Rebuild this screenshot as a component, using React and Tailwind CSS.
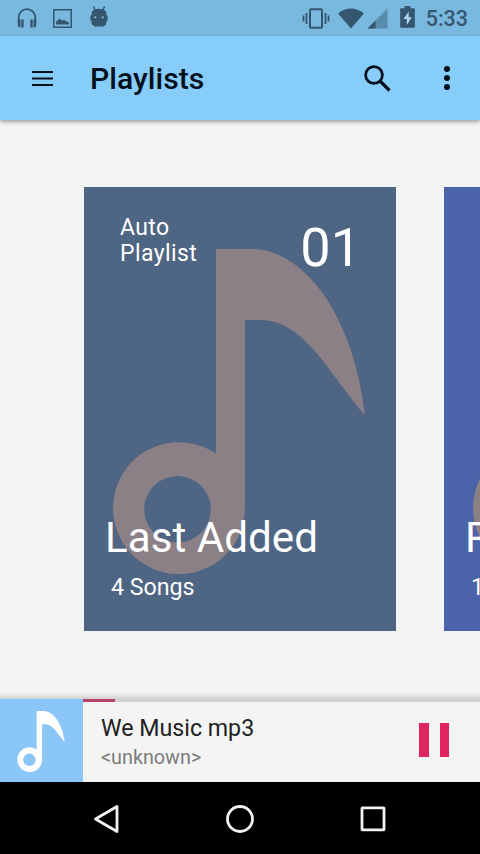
import React, { useState } from "react";

const playlists = [
  {
    id: 1,
    type: "Auto Playlist",
    number: "01",
    name: "Last Added",
    count: "4 Songs",
    color: "bg-[#4e6583]",
  },
  {
    id: 2,
    name: "R",
    count: "1",
    color: "bg-[#4b63a9]",
  },
];

const App = () => {
  const [progress] = useState(8);

  return (
    <div className="flex h-[854px] w-[480px] flex-col overflow-hidden bg-[#f4f4f4] font-['Roboto',sans-serif]">
      <StatusBar />
      <Toolbar title="Playlists" />

      {/* Playlist carousel */}
      <main className="flex min-h-0 flex-1 gap-12 overflow-hidden pt-[67px] pl-[84px]">
        {playlists.map((playlist) => (
          <PlaylistCard key={playlist.id} playlist={playlist} />
        ))}
      </main>

      <NowPlaying title="We Music mp3" artist="<unknown>" progress={progress} />
      <NavigationBar />
    </div>
  );
};

const StatusBar = () => {
  return (
    <div className="flex h-9 shrink-0 items-center bg-[#79b8df] pr-[12px] pl-[17px] text-[#34566f]">
      {/* Notifications */}
      <svg width="20" height="21" viewBox="0 0 20 21" fill="none">
        <path
          d="M1.7 14V9.500a8.300 8.300 0 0 1 16.600 0V14"
          stroke="currentColor"
          strokeWidth="1.800"
        />
        <path
          d="M.8 11.500h2.700v8H3a2.200 2.200 0 0 1-2.200-2.200zM4.300 11.500h2.400v8H4.300zM19.200 11.500h-2.700v8h.5a2.200 2.200 0 0 0 2.200-2.200zM13.300 11.500h2.400v8h-2.400z"
          fill="currentColor"
        />
      </svg>
      <svg className="ml-[16px]" width="19" height="19" viewBox="0 0 19 19">
        <path
          d="M.8.8h17.4v17.4H.8z"
          fill="none"
          stroke="currentColor"
          strokeWidth="1.5"
        />
        <path
          d="M3 15.5v-2.7l3.6-3.3 2.5 2.3 1.4-1 1.5.7 4 2v2z"
          fill="currentColor"
        />
      </svg>
      <svg
        className="mb-[3px] ml-[18px]"
        width="18"
        height="21"
        viewBox="0 0 18 21"
      >
        <path
          d="M3.5.5 5 4M14.500.5 13 4"
          stroke="currentColor"
          strokeWidth="1.5"
        />
        <path
          d="M4.500 3.200Q9 2.500 13.500 3.200L16 5.500l.6 4h1v5h-1l-.4 3.500-2.500 2.500H4.300L1.800 18l-.4-3.500h-1v-5h1L2 5.500z"
          fill="currentColor"
        />
        <circle cx="5.300" cy="11.300" r="1.100" fill="#8fbbd6" />
        <circle cx="12.700" cy="11.300" r="1.100" fill="#8fbbd6" />
      </svg>

      {/* System icons */}
      <div className="ml-auto flex items-center">
        <svg width="28" height="21" viewBox="0 0 28 21" fill="none">
          <rect
            x="8"
            y="1.200"
            width="12"
            height="18.600"
            rx="1"
            stroke="currentColor"
            strokeWidth="2"
          />
          <path
            d="M1.500 7.500v6M4.500 5v11M23.500 5v11M26.500 7.500v6"
            stroke="currentColor"
            strokeWidth="1.800"
          />
        </svg>
        <svg className="ml-[8px]" width="26" height="21" viewBox="0 0 27 21">
          <path d="M0 5.300Q13.500-5 27 5.300L13.500 21z" fill="currentColor" />
        </svg>
        <svg className="ml-[3px]" width="21" height="21" viewBox="0 0 21 21">
          <path d="M20.500.5v20H.5z" fill="currentColor" opacity=".45" />
          <path d="M8.500 12.500v8h-8z" fill="currentColor" />
        </svg>
        <svg
          className="mb-[2px] ml-[12px]"
          width="15"
          height="22"
          viewBox="0 0 15 22"
        >
          <path
            d="M4.500 0h6v2.200H14a.8.8 0 0 1 .8.8v18a.8.8 0 0 1-.8.8H1a.8.8 0 0 1-.8-.8V3a.8.8 0 0 1 .8-.8h3.500z"
            fill="currentColor"
          />
          <path d="M8.700 5.500 3.500 13h3.300v6l5-7.800H8.700z" fill="#a9d6f2" />
        </svg>
        <span className="ml-[11px] pt-px text-[21.500px] leading-9 font-medium">
          5:33
        </span>
      </div>
    </div>
  );
};

const Toolbar = ({ title }) => {
  return (
    <header className="z-10 flex h-[84px] shrink-0 items-center bg-[#87cdfa] pl-8 text-[#06101c] shadow-[0_2px_4px_rgba(0,0,0,0.35)]">
      <button aria-label="Menu">
        <svg width="21" height="15" viewBox="0 0 21 15">
          <path
            d="M0 1h21M0 7.5h21M0 14h21"
            stroke="currentColor"
            strokeWidth="2"
          />
        </svg>
      </button>
      <h1 className="ml-[37px] pt-px text-[30.200px] leading-9 font-medium">
        {title}
      </h1>
      <button aria-label="Search" className="mr-[53px] ml-auto">
        <svg width="27" height="27" viewBox="0 0 27 27" fill="none">
          <circle
            cx="10"
            cy="10"
            r="8.4"
            stroke="currentColor"
            strokeWidth="2.7"
          />
          <path d="m16 16 9.5 9.5" stroke="currentColor" strokeWidth="3.2" />
        </svg>
      </button>
      <button aria-label="More options" className="mr-[30px]">
        <svg width="6" height="24" viewBox="0 0 6 24" fill="currentColor">
          <circle cx="3" cy="3" r="3" />
          <circle cx="3" cy="12" r="3" />
          <circle cx="3" cy="21" r="3" />
        </svg>
      </button>
    </header>
  );
};

const NoteIcon = ({ className }) => {
  return (
    <svg className={className} viewBox="0 0 252 325" fill="currentColor">
      <path
        fillRule="evenodd"
        d="M103 0H138C192 0 241 68 252 166C218 128 192 71 148 71H132V259A66 66 0 1 1 103 204.500ZM64.500 227A33.300 33.300 0 1 0 64.500 293.600A33.300 33.300 0 1 0 64.500 227Z"
      />
    </svg>
  );
};

const PlaylistCard = ({ playlist }) => {
  return (
    <article
      className={`relative flex h-[444px] w-[312px] shrink-0 flex-col text-white ${playlist.color}`}
    >
      <NoteIcon className="absolute top-[62px] left-[29px] h-[325px] w-[252px] text-[#8a8086]" />
      {playlist.type && (
        <div className="relative flex items-start justify-between pt-[28px] pr-[35px] pl-9">
          <p className="w-[90px] text-[23px] leading-[26px] tracking-[0.4px]">
            {playlist.type}
          </p>
          <span className="text-[54px] leading-[66px]">{playlist.number}</span>
        </div>
      )}
      <h2 className="relative mt-auto pl-[21px] text-[42.200px] leading-[50px] whitespace-nowrap">
        {playlist.name}
      </h2>
      <p className="relative mt-[10px] mb-[30px] pl-[27px] text-[23.200px] leading-7 whitespace-nowrap">
        {playlist.count}
      </p>
    </article>
  );
};

const NowPlaying = ({ title, artist, progress }) => {
  return (
    <section className="relative flex h-[83px] shrink-0 bg-[#f4f4f4]">
      <div className="absolute -top-[6px] right-0 left-0 h-[6px] bg-linear-to-b from-[#f0f0f0] to-[#d2d2d2]" />
      <div className="flex w-[83px] items-center justify-center bg-[#8ac6f8]">
        <NoteIcon className="mt-px mr-[1px] h-[61px] w-12 text-white" />
      </div>
      <div className="flex flex-1 flex-col">
        <div className="h-[3px] bg-[#d2d2d2]">
          <div
            className="h-full bg-[#b8406b]"
            style={{ width: `${progress}%` }}
          />
        </div>
        <div className="flex flex-1 items-center pr-[31px] pl-[18px]">
          <div className="min-w-0 flex-1 pt-[2px]">
            <p className="text-[23.200px] leading-[30px] text-[#212121]">
              {title}
            </p>
            <p className="text-[19.800px] leading-[30px] text-[#7b7b7b]">
              {artist}
            </p>
          </div>
          <button aria-label="Pause" className="mb-[4px] flex gap-[11px]">
            <span className="h-[34px] w-[10px] bg-[#e0245e]" />
            <span className="h-[34px] w-[9px] bg-[#e0245e]" />
          </button>
        </div>
      </div>
    </section>
  );
};

const NavigationBar = () => {
  return (
    <nav className="flex h-[72px] shrink-0 items-center justify-between bg-black pt-px pr-[94px] pl-[92px] text-[#f2f2f2]">
      <svg width="28" height="30" viewBox="0 0 28 30" fill="none">
        <path
          d="M25 2.500v25L3.500 15z"
          stroke="currentColor"
          strokeWidth="2.800"
          strokeLinejoin="round"
        />
      </svg>
      <svg width="28" height="28" viewBox="0 0 28 28" fill="none">
        <circle
          cx="13"
          cy="14"
          r="12.500"
          stroke="currentColor"
          strokeWidth="2.800"
          className="translate-x-px"
        />
      </svg>
      <svg width="26" height="26" viewBox="0 0 26 26" fill="none">
        <rect
          x="2"
          y="1.800"
          width="22"
          height="22"
          rx=".5"
          stroke="currentColor"
          strokeWidth="2.800"
        />
      </svg>
    </nav>
  );
};

export default App;
